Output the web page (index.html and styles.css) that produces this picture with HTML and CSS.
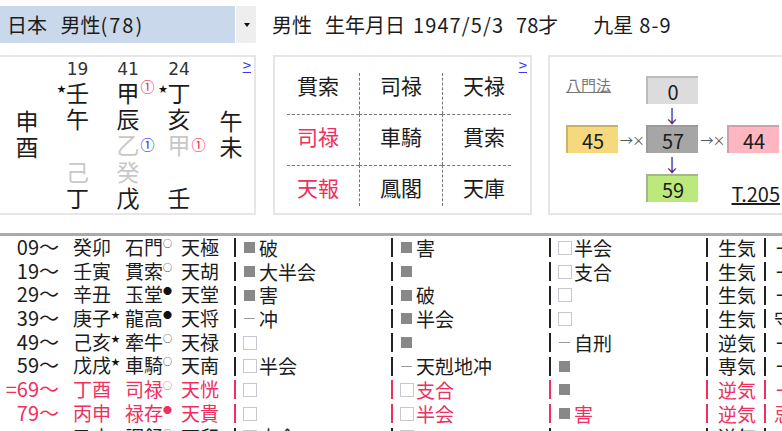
FILE: index.html
```html
<!DOCTYPE html>
<html lang="ja">
<head>
<meta charset="utf-8">
<title>日本 男性(78)</title>
<link rel="stylesheet" href="styles.css">
</head>
<body>
<header class="top">
  <div class="select"><span class="select-label">日本&nbsp;&nbsp;&nbsp;男性<span class="wider">(78)</span></span><span class="select-btn"><i class="caret"></i></span></div>
  <div class="info"><span>男性</span><span>生年月日</span><span class="wide date">1947/5/3</span><span class="years">78才</span><span class="nine">九星</span><span class="wide nine-v">8-9</span></div>
</header>
<section class="panels">
  <div class="panel pillars">
    <a class="more">&gt;</a>
    <div class="pcol side"><b>申</b><b>酉</b></div>
    <div class="pcol">
      <span class="age">19</span><b><i class="star">★</i>壬</b><b>午</b><b></b><b class="dim">己</b><b>丁</b>
    </div>
    <div class="pcol">
      <span class="age">41</span><b>甲<i class="ring red">①</i></b><b>辰</b><b class="dim">乙<i class="ring blue">①</i></b><b class="dim">癸</b><b>戊</b>
    </div>
    <div class="pcol">
      <span class="age">24</span><b><i class="star">★</i>丁</b><b>亥</b><b class="dim">甲<i class="ring red">①</i></b><b></b><b>壬</b>
    </div>
    <div class="pcol side end"><b>午</b><b>未</b></div>
  </div>
  <div class="panel star-panel">
    <a class="more">&gt;</a>
    <div class="star-grid">
      <div class="c">貫索</div><div class="c v">司禄</div><div class="c v e">天禄</div>
      <div class="c h red-t">司禄</div><div class="c h v">車騎</div><div class="c h v e">貫索</div>
      <div class="c h red-t">天報</div><div class="c h v">鳳閣</div><div class="c h v e">天庫</div>
    </div>
  </div>
  <div class="panel gate-panel">
    <div class="gate-grid">
      <a class="gate-title">八門法</a>
      <div class="box gray g-top">0</div>
      <div class="down a1">↓</div>
      <div class="box yellow g-left">45</div>
      <div class="side-arrow a2">→×</div>
      <div class="box mid g-mid">57</div>
      <div class="side-arrow a3">→×</div>
      <div class="box pink g-right">44</div>
      <div class="down a4">↓</div>
      <div class="box green g-bot">59</div>
      <a class="tnum">T.205</a>
    </div>
  </div>
</section>
<section class="list">
  <div class="row">
    <span class="age-c">09〜</span><span class="k">癸卯</span><span class="t">石門<sup class="o">○</sup></span><span class="s">天極</span>
    <span class="cell"><i class="bar"></i><i class="m fill"></i>破</span><span class="cell"><i class="bar"></i><i class="m fill"></i>害</span><span class="cell"><i class="bar"></i><i class="m box-m"></i>半会</span><span class="cell ki"><i class="bar"></i>生気</span><span class="cell last"><i class="bar"></i>一</span>
  </div>
  <div class="row">
    <span class="age-c">19〜</span><span class="k">壬寅</span><span class="t">貫索<sup class="o">○</sup></span><span class="s">天胡</span>
    <span class="cell"><i class="bar"></i><i class="m fill"></i>大半会</span><span class="cell"><i class="bar"></i><i class="m fill"></i></span><span class="cell"><i class="bar"></i><i class="m box-m"></i>支合</span><span class="cell ki"><i class="bar"></i>生気</span><span class="cell last"><i class="bar"></i>一</span>
  </div>
  <div class="row">
    <span class="age-c">29〜</span><span class="k">辛丑</span><span class="t">玉堂<sup class="o">●</sup></span><span class="s">天堂</span>
    <span class="cell"><i class="bar"></i><i class="m fill"></i>害</span><span class="cell"><i class="bar"></i><i class="m fill"></i>破</span><span class="cell"><i class="bar"></i><i class="m box-m"></i></span><span class="cell ki"><i class="bar"></i>生気</span><span class="cell last"><i class="bar"></i>一</span>
  </div>
  <div class="row">
    <span class="age-c">39〜</span><span class="k">庚子<sup class="o">★</sup></span><span class="t">龍高<sup class="o">●</sup></span><span class="s">天将</span>
    <span class="cell"><i class="bar"></i><i class="m dash"></i>冲</span><span class="cell"><i class="bar"></i><i class="m fill"></i>半会</span><span class="cell"><i class="bar"></i><i class="m box-m"></i></span><span class="cell ki"><i class="bar"></i>生気</span><span class="cell last"><i class="bar"></i><span class="tight">守</span></span>
  </div>
  <div class="row">
    <span class="age-c">49〜</span><span class="k">己亥<sup class="o">★</sup></span><span class="t">牽牛<sup class="o">○</sup></span><span class="s">天禄</span>
    <span class="cell"><i class="bar"></i><i class="m box-m"></i></span><span class="cell"><i class="bar"></i><i class="m fill"></i></span><span class="cell"><i class="bar"></i><i class="m dash"></i>自刑</span><span class="cell ki"><i class="bar"></i>逆気</span><span class="cell last"><i class="bar"></i>一</span>
  </div>
  <div class="row">
    <span class="age-c">59〜</span><span class="k">戊戌<sup class="o">★</sup></span><span class="t">車騎<sup class="o">○</sup></span><span class="s">天南</span>
    <span class="cell"><i class="bar"></i><i class="m box-m"></i>半会</span><span class="cell"><i class="bar"></i><i class="m dash"></i>天剋地冲</span><span class="cell"><i class="bar"></i><i class="m fill"></i></span><span class="cell ki"><i class="bar"></i>専気</span><span class="cell last"><i class="bar"></i>一</span>
  </div>
  <div class="row hot">
    <span class="age-c">=69〜</span><span class="k">丁酉</span><span class="t">司禄<sup class="o">○</sup></span><span class="s">天恍</span>
    <span class="cell"><i class="bar"></i><i class="m box-m"></i></span><span class="cell"><i class="bar"></i><i class="m box-m"></i>支合</span><span class="cell"><i class="bar"></i><i class="m fill"></i></span><span class="cell ki"><i class="bar"></i>逆気</span><span class="cell last"><i class="bar"></i>一</span>
  </div>
  <div class="row hot">
    <span class="age-c">79〜</span><span class="k">丙申</span><span class="t">禄存<sup class="o">●</sup></span><span class="s">天貴</span>
    <span class="cell"><i class="bar"></i><i class="m box-m"></i></span><span class="cell"><i class="bar"></i><i class="m box-m"></i>半会</span><span class="cell"><i class="bar"></i><i class="m fill"></i>害</span><span class="cell ki"><i class="bar"></i>逆気</span><span class="cell last"><i class="bar"></i><span class="tight">忌</span></span>
  </div>
  <div class="row">
    <span class="age-c"></span><span class="k">乙未</span><span class="t">調舒<sup class="o">○</sup></span><span class="s">天印</span>
    <span class="cell"><i class="bar"></i><i class="m box-m"></i>支合</span><span class="cell"><i class="bar"></i><i class="m box-m"></i></span><span class="cell"><i class="bar"></i><i class="m fill"></i></span><span class="cell ki"><i class="bar"></i>逆気</span><span class="cell last"><i class="bar"></i>一</span>
  </div>
</section>
</body>
</html>
```

FILE: styles.css
```css
* { box-sizing: border-box; }
html, body { margin: 0; height: 431px; overflow: hidden; background: #fff; }
body { font-family: "Noto Sans CJK JP", "Noto Sans", sans-serif; color: #1c1c1c; width: 782px; }
i { font-style: normal; }
b { font-weight: 400; }

.top { display: flex; align-items: flex-start; padding-top: 6px; height: 55px; }
.select { display: flex; width: 256px; height: 37px; }
.select-label { width: 235px; background: #c9d8ea; font-size: 20px; line-height: 37px; padding-left: 7px; white-space: nowrap; }
.select-btn { margin-left: 1px; width: 20px; background: #eee; display: flex; align-items: center; justify-content: center; }
.caret { width: 0; height: 0; border-left: 3px solid transparent; border-right: 3px solid transparent; border-top: 4px solid #111; margin-left: 2px; }
.info { display: flex; margin-left: 16px; font-size: 20px; gap: 13px; line-height: 37px; white-space: nowrap; }
.wide { letter-spacing: 1.1px; }
.wider { letter-spacing: 2px; }
.date { margin-left: -5px; }
.years { margin-left: -1px; }
.nine { margin-left: 22px; }
.nine-v { margin-left: -7px; }

.panels { display: flex; height: 160px; overflow: hidden; }
.panel { position: relative; border: 2px solid #e6e6e6; height: 160px; background: #fff; flex: none; }
.more { position: absolute; top: 0; right: 3px; color: #3a3aee; font-size: 15px; line-height: 15px; text-decoration: underline; }

.pillars { width: 256px; border-left: 0; display: grid; grid-template-columns: 54px 47px 54px 48px 51px; }
.pcol { display: flex; flex-direction: column; align-items: center; font-size: 23px; padding-top: 2px; }
.pcol b { display: block; position: relative; height: 26.2px; line-height: 26.2px; width: 23px; text-align: center; }
.pcol.side { padding-top: 51px; }
.pcol.side b { height: 25.5px; line-height: 25.5px; }
.pcol.end { padding-left: 5px; }
.age { font-family: "DejaVu Sans", sans-serif; font-size: 17px; line-height: 20px; height: 20px; color: #333; }
.dim { color: #c8c8c8; }
.star { position: absolute; right: 100%; top: -3px; font-size: 9px; color: #111; }
.ring { position: absolute; left: 100%; top: -6px; font-size: 14px; margin-left: 1px; }
.dim .ring { top: 0; }
.red { color: #ee2255; }
.blue { color: #2222ee; }

.star-panel { width: 259px; margin-left: 17px; padding: 16px 0 0 12px; }
.star-grid { display: grid; grid-template-columns: 72px 83px 69px; grid-template-rows: 41px 51px 41px; font-size: 21px; line-height: 21px; }
.c { padding-left: 10px; padding-top: 2px; }
.c.v { border-left: 1px dashed #777; padding-left: 20px; }
.c.e { padding-left: 20px; }
.c.h { border-top: 1px dashed #777; padding-top: 11px; }
.red-t { color: #ee2f60; }

.gate-panel { width: 240px; margin-left: 16px; padding: 19px 0 0 16px; }
.gate-grid { display: grid; grid-template-columns: 52px 28px 52px 29px 52px; grid-template-rows: 28px 21px 28px 21px 28px; align-items: center; justify-items: center; }
.gate-title { grid-area: 1 / 1; justify-self: start; align-self: start; font-size: 15px; line-height: 18px; color: #777; text-decoration: underline; }
.box { width: 52px; height: 28px; border-top: 2px solid #bbb; border-left: 2px solid #bbb; font-size: 20px; line-height: 27px; text-align: center; }
.gray { background: #dcdcdc; }
.mid { background: #a6a6a6; border-color: #9a9a9a; }
.yellow { background: #f5d97c; border-color: #c9b26a; }
.pink { background: #ffb6c1; border-color: #cfa0a8; }
.green { background: #bbe97c; border-color: #a5b58c; }
.g-top { grid-area: 1 / 3; }
.g-left { grid-area: 3 / 1; }
.g-mid { grid-area: 3 / 3; }
.g-right { grid-area: 3 / 5; }
.g-bot { grid-area: 5 / 3; }
.a1 { grid-area: 2 / 3; }
.a4 { grid-area: 4 / 3; }
.a2 { grid-area: 3 / 2; }
.a3 { grid-area: 3 / 4; }
.down { font-size: 18px; line-height: 20px; color: #5a1a6a; }
.side-arrow { font-size: 13px; color: #555; white-space: nowrap; letter-spacing: -1px; }
.tnum { grid-area: 5 / 5; font-size: 20px; line-height: 20px; text-decoration: underline; align-self: end; justify-self: end; margin-bottom: -2px; margin-right: -1px; }

.list { margin-top: 18px; border-top: 3px solid #aaa; font-size: 19px; }
.row { display: grid; grid-template-columns: 73px 52px 56px 53px 157px 158px 157px 58px 18px; height: 23.7px; line-height: 22px; white-space: nowrap; }
.age-c { text-align: right; padding-right: 14px; font-size: 20px; }
.cell { display: flex; align-items: center; }
.last { overflow: hidden; }
.bar { width: 2px; height: 19px; background: #222; margin-right: 7px; flex: none; }
.ki .bar { margin-right: 10px; }
.last .bar { margin-right: 10px; }
.tight { margin-left: -2px; }
.m { flex: none; display: block; }
.fill { width: 11px; height: 11px; background: #888; margin-left: 1px; margin-right: 4px; }
.box-m { width: 14px; height: 14px; border: 1px solid #c8c8d0; margin-right: 2px; }
.dash { height: 1px; background: #999; width: 11px; margin-left: 1px; margin-right: 4px; }
.o { font-size: 9px; line-height: 0; vertical-align: 8px; color: #111; }
.hot { color: #ee2f60; }
.hot .bar { background: #ee2f60; }
.hot .o { color: #ee2f60; }
```
